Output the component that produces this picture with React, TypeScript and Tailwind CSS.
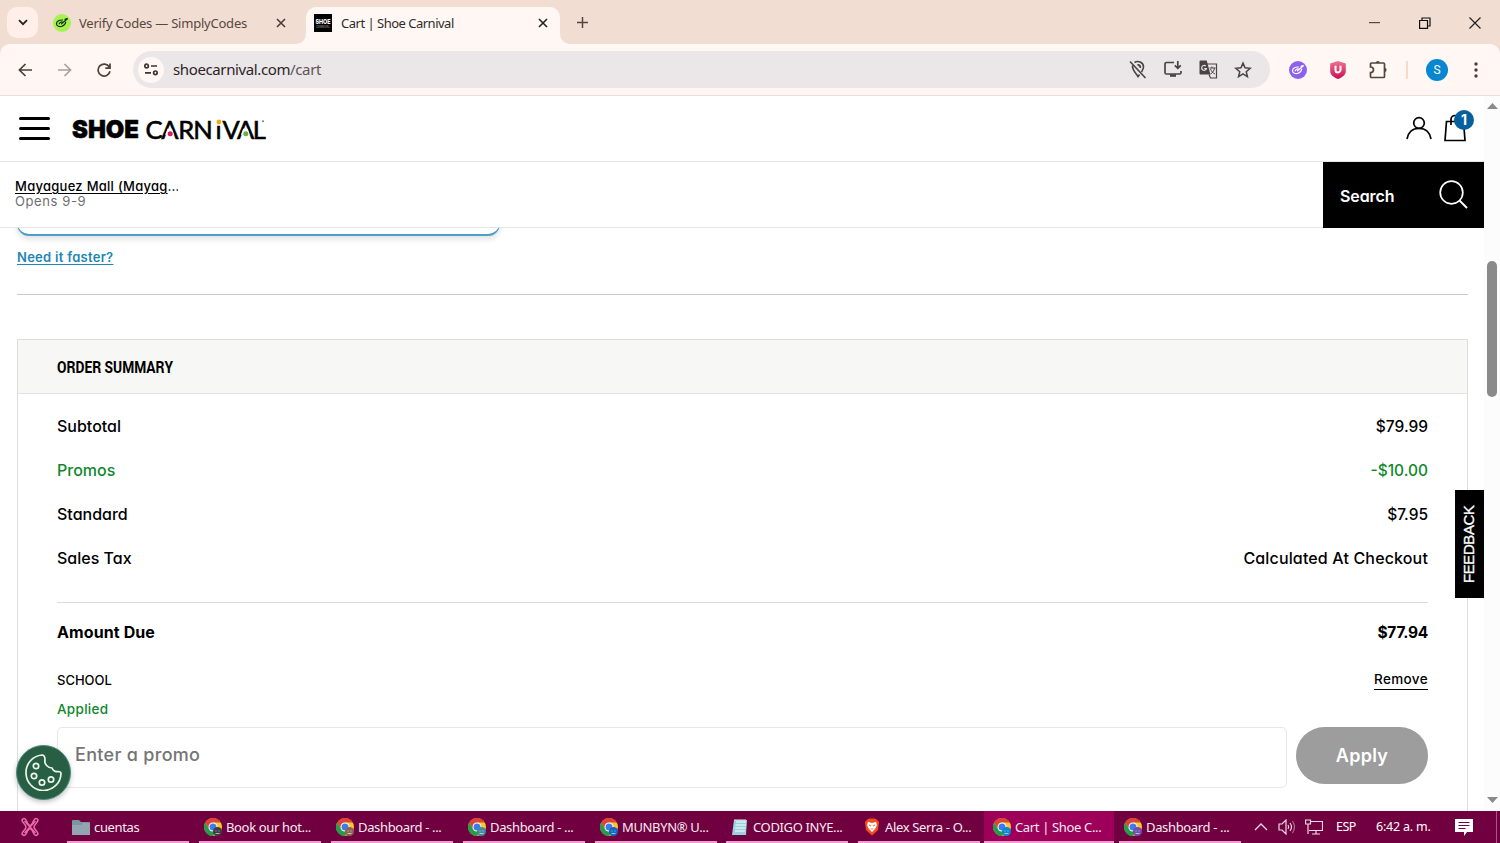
import React from "react";
import type { ReactNode } from "react";

const UI = "font-['Noto_Sans',sans-serif]";
const GEO = "font-['Inter',sans-serif] [font-feature-settings:'cv11','ss03']";

function SimplyIcon({ bg, fg }: { bg: string; fg: string }) {
  return (
    <svg width="18" height="18" viewBox="0 0 18 18" fill="none">
      <circle cx="9" cy="9" r="9" fill={bg} />
      <g stroke={fg} strokeWidth="1.2" strokeLinecap="round">
        <path d="M9.500 6C6 5.800 3.300 7.800 3.500 10c.3 2.400 3.200 3 5.500 2.200 2.200-.8 3.600-2.400 3.700-4.200" />
        <path d="M8.500 9.800 14.500 4.800M6.200 9.800c.6-1.500 2.300-2.200 3.600-1.600M12 5.300l1.800-.7" />
      </g>
    </svg>
  );
}

function Close({ color, size = 10 }: { color: string; size?: number }) {
  return (
    <svg width={size} height={size} viewBox="0 0 10 10" stroke={color} strokeWidth="1.600">
      <path d="M1 1l8 8M9 1L1 9" />
    </svg>
  );
}

function TabStrip() {
  return (
    <div className="flex h-[44px] shrink-0 bg-[#f2ddd2]">
      <div className="flex w-[53px] pl-[7px] pt-[7px]">
        <div className="flex h-[31px] w-[31px] items-center justify-center rounded-[10px] bg-[#ffefe8]">
          <svg width="10" height="7" viewBox="0 0 10 7" fill="none" stroke="#222" strokeWidth="1.800"><path d="M1 1.200l4 4 4-4" /></svg>
        </div>
      </div>
      <div className="flex h-[45px] w-[253px] items-center">
        <SimplyIcon bg="#a6f250" fg="#14300c" />
        <span className="ml-[8px] w-[197px] whitespace-nowrap pt-[2px] text-[13px] tracking-[-0.22px] text-[#56483f]">Verify Codes — SimplyCodes</span>
        <Close color="#4a3d36" />
      </div>
      <div className="relative mt-[7px] flex h-[37px] w-[254px] items-center rounded-t-[10px] bg-[#fef7f4] pb-[6px] pl-[8px]">
        <svg className="absolute -left-[10px] bottom-0" width="10" height="10"><path d="M10 0v10H0A10 10 0 0 0 10 0Z" fill="#fef7f4" /></svg>
        <svg className="absolute -right-[10px] bottom-0" width="10" height="10"><path d="M0 0v10h10A10 10 0 0 1 0 0Z" fill="#fef7f4" /></svg>
        <svg width="18" height="18" viewBox="0 0 18 18">
          <path d="M0 0h18v18H0z" />
          <text x="1.500" y="10" fontFamily="Inter" fontWeight="800" fontSize="6.500" fill="#fff" textLength="15" lengthAdjust="spacingAndGlyphs">SHOE</text>
          <text x="2" y="13.800" fontFamily="Inter" fontSize="3.400" fill="#aaa" textLength="14" lengthAdjust="spacingAndGlyphs">CARNIVAL</text>
        </svg>
        <span className="ml-[9px] w-[197px] whitespace-nowrap pt-[2px] text-[13px] tracking-[-0.5px] text-[#322c29]">Cart | Shoe Carnival</span>
        <Close color="#222" />
      </div>
      <div className="flex h-[45px] flex-1 items-center pl-[17px]">
        <svg width="11" height="11" viewBox="0 0 11 11" stroke="#54463e" strokeWidth="1.500"><path d="M5.500 0v11M0 5.500h11" /></svg>
        <div className="ml-auto flex items-center pr-[19px]">
          <svg className="mr-[39px]" width="11" height="11"><path d="M0 5h11v1.200H0z" fill="#554940" /></svg>
          <svg className="mr-[38px]" width="12" height="12" fill="none" stroke="#111" strokeWidth="1.200"><path d="M.6 3.500h7.900v7.900H.6zM3 3.500V1h8v8H8.500" /></svg>
          <svg width="12" height="12" stroke="#222" strokeWidth="1.200"><path d="M.5.5l11 11M11.500.5l-11 11" /></svg>
        </div>
      </div>
    </div>
  );
}

function Toolbar() {
  return (
    <div className="flex h-[52px] shrink-0 bg-[#f2ddd2]">
      <div className="flex flex-1 items-center rounded-t-[10px] border-b border-[#eaded9] bg-[#fef7f4] pl-[18px]">
        <svg width="14" height="14" viewBox="0 0 14 14" fill="none" stroke="#4b4039" strokeWidth="1.700"><path d="M14 7H1.500M7.500 1 1.400 7l6.100 6" /></svg>
        <svg className="ml-[26px]" width="14" height="14" viewBox="0 0 14 14" fill="none" stroke="#a8a09c" strokeWidth="1.700"><path d="M0 7h12.500M6.500 1l6.100 6-6.100 6" /></svg>
        <svg className="ml-[25px]" width="14" height="14" viewBox="0 0 14 14" fill="none" stroke="#4b4039" strokeWidth="1.700"><path d="M12.300 4A6 6 0 1 0 13 8.300M13 .5v4.700H8.300" /></svg>
        <div className="ml-[22px] flex h-[37px] w-[1137px] items-center rounded-full bg-[#ebe6e8] pl-[5px]">
          <div className="flex h-[26px] w-[26px] items-center justify-center rounded-full bg-[#fef7f4]">
            <svg width="14" height="13" viewBox="0 0 14 13" fill="none" stroke="#3d3531" strokeWidth="1.700"><circle cx="2.600" cy="3" r="1.800" /><path d="M7 3h6M1 9.800h6" /><circle cx="11.400" cy="9.800" r="1.800" /></svg>
          </div>
          <span className="ml-[9px] whitespace-nowrap text-[15px] tracking-[-0.38px] text-[#2b2526]">shoecarnival.com<span className="text-[#5d5557]">/cart</span></span>
          <div className="ml-auto flex items-center pr-[18px]">
            <svg className="mr-[17px]" width="18" height="19" viewBox="0 0 18 19" fill="none" stroke="#4b4346" strokeWidth="1.600"><path d="M1 1.500 16.500 18M5.500 2.500C9 .2 14.500 2.200 14.500 7c0 1.700-1 3.500-2 5M3.500 5.500C3 10 7 13.500 9 16.500l1.600-2.100" /><path d="M8.500 5.200a2 2 0 0 1 2.600 2.600" strokeWidth="2" /></svg>
            <svg className="mr-[17px]" width="18" height="17" viewBox="0 0 18 17" fill="none" stroke="#4b4346" strokeWidth="1.700"><path d="M10 1.500H2.500A1.500 1.500 0 0 0 1 3v8.500A1.500 1.500 0 0 0 2.500 13h13a1.500 1.500 0 0 0 1.500-1.500V10M13.800 0v7M10.800 4.300l3 3 3-3" /><path d="M6 13.300h6v2.500H6z" fill="#4b4346" stroke="none" /></svg>
            <svg className="mr-[16px]" width="19" height="19" viewBox="0 0 19 19"><path d="M1.500.5h6.200l3.800 14H1.500A1 1 0 0 1 .5 13.500v-12a1 1 0 0 1 1-1Z" fill="#4b4346" /><path d="M8 4h9.500v14h-6L10 14.500" fill="none" stroke="#4b4346" strokeWidth="1.200" /><path d="M10.500 8h6M13 6.500V8m2.500 0c-.5 3-2 5-4 6m0-5c1 2.500 2.500 4 4.500 5" fill="none" stroke="#4b4346" strokeWidth="1" /><path d="M6.800 6.200A2.400 2.400 0 1 0 7.400 8.500H5.200" fill="none" stroke="#ebe6e8" strokeWidth="1.200" /></svg>
            <svg width="18" height="18" viewBox="0 0 24 24" fill="none" stroke="#4b4346" strokeWidth="2"><path d="m12 2.800 2.700 6.300 6.800.6-5.200 4.500 1.600 6.700-5.900-3.600-5.900 3.600 1.600-6.700-5.200-4.500 6.800-.6z" /></svg>
          </div>
        </div>
        <div className="ml-[19px] flex items-center">
          <SimplyIcon bg="#8f60f0" fg="#fff" />
          <svg className="ml-[23px]" width="16" height="18" viewBox="0 0 16 18"><defs><linearGradient id="ub" x2="0" y2="1"><stop stopColor="#ee7291" /><stop offset="1" stopColor="#c90e53" /></linearGradient></defs><path d="M8 0 15.800 2.500v7.500c0 4-3.800 6.500-7.800 8C4 16.500.2 14 .2 10V2.500z" fill="url(#ub)" /><path d="M5.500 4.700v4.200a2.500 2.500 0 0 0 5 0V4.700" fill="none" stroke="#fff" strokeWidth="2" /></svg>
          <svg className="ml-[23px]" width="19" height="19" viewBox="0 0 19 19" fill="none" stroke="#54443b" strokeWidth="1.700"><path d="M2.500 3h12a1 1 0 0 1 1 1v12.500a1 1 0 0 1-1 1h-12a1 1 0 0 1-1-1v-3.800C5.500 12.700 5.500 7 1.500 7V4a1 1 0 0 1 1-1Z" /><path d="M6.800 3a2 2 0 0 1 4 0zM15.500 7.800a2.100 2.100 0 0 1 0 4.200z" fill="#54443b" stroke="none" /></svg>
          <div className="ml-[18px] h-[18px] w-[2px] bg-[#fbd9c9]" />
          <div className="ml-[18px] flex h-[22px] w-[22px] items-center justify-center rounded-full bg-[#0887d1] font-['Roboto',sans-serif] text-[12px] text-white">S</div>
          <svg className="ml-[26px]" width="4" height="16" fill="#4b4039"><circle cx="2" cy="2" r="1.700" /><circle cx="2" cy="8" r="1.700" /><circle cx="2" cy="14" r="1.700" /></svg>
        </div>
      </div>
    </div>
  );
}

function Logo() {
  return (
    <svg width="200" height="30" viewBox="0 -3 200 30">
      <text x="0" y="21.300" fontFamily="Inter" fontWeight="900" fontSize="25" stroke="#000" strokeWidth=".5" textLength="67" lengthAdjust="spacingAndGlyphs">SHOE</text>
      <text x="73.500 89.300 106.300 121.200 143.500 150.500 165 180.800" y="21.500" fontFamily="Lato" fontSize="25.500" stroke="#000" strokeWidth=".6">CARNiVAL</text>
      <path d="M95.500 11.800h4.400l2.400 5.900h-9.200zM171.200 11.800h4.400l2.400 5.900h-9.200z" fill="#fff" />
      <circle cx="98.200" cy="16.800" r="2.500" fill="#d1205a" />
      <path d="M143.500 .5h6v6.800h-6z" fill="#fff" />
      <circle cx="146.900" cy="5" r="2.400" fill="#f5a81c" />
      <circle cx="173.800" cy="16.800" r="2.500" fill="#64b445" />
      <circle cx="191" cy="4.300" r="1" fill="#777" />
    </svg>
  );
}

function SiteHeader() {
  return (
    <>
      <div className="flex h-[66px] shrink-0 items-center border-b border-[#e5e5e5] pl-[18px] pr-[17px]">
        <div className="flex w-[32px] flex-col gap-[7px] px-[0.5px]">
          <div className="h-[3px] rounded bg-black" /><div className="h-[3px] rounded bg-black" /><div className="h-[3px] rounded bg-black" />
        </div>
        <div className="ml-[22px]"><Logo /></div>
        <svg className="mb-[1px] ml-auto" width="26" height="24" viewBox="0 0 26 24" fill="none" stroke="#000" strokeWidth="1.700"><circle cx="13" cy="7" r="5.300" /><path d="M1 23c1-6.500 5.500-10.700 12-10.700S24 16.500 25 23" /></svg>
        <div className="relative mb-[2px] ml-[12px] mr-[1px] h-[28px] w-[22px]">
          <svg width="22" height="28" viewBox="0 0 22 28" fill="none" stroke="#000" strokeWidth="1.700"><path d="M2.500 7.500h17L21 26.500H1zM7 11V5.500a4 4 0 0 1 8 0v6" /></svg>
          <div className={`absolute left-[10px] top-[-4px] flex h-[20px] w-[20px] items-center justify-center rounded-full bg-[#07609d] text-[14px] font-bold text-white ${GEO}`}>1</div>
        </div>
      </div>
      <div className="flex h-[66px] shrink-0">
        <div className="flex-1 border-b border-[#e5e5e5] pl-[15px] pt-[16px]">
          <div className="h-[16px] w-fit overflow-hidden whitespace-nowrap text-[13px] font-medium leading-[17px] tracking-[0.27px]"><span className="underline underline-offset-2">Mayaguez Mall (Mayag</span><span className="tracking-[-1px]">…</span></div>
          <div className="text-[13px] leading-[15px] tracking-[0.6px] text-[#6e6e6e]">Opens 9-9</div>
        </div>
        <div className="flex w-[161px] items-center bg-black pl-[17px] pr-[16px] pt-[1px] text-white">
          <span className="text-[16px] font-semibold tracking-[-0.1px]">Search</span>
          <svg className="mb-[2px] ml-auto" width="29" height="29" viewBox="0 0 29 29" fill="none" stroke="#fff" strokeWidth="1.700"><circle cx="12.500" cy="12.500" r="11.300" /><path d="m20.500 20.500 7.500 7.500" strokeWidth="2" /></svg>
        </div>
      </div>
    </>
  );
}

function Row({ label, value, green = false, wide = false }: { label: string; value: ReactNode; green?: boolean; wide?: boolean }) {
  return (
    <div className={`flex h-[44px] items-center justify-between font-medium ${green ? "text-[#10872c]" : "text-black"}`}>
      <span className="pb-[2px] text-[16px]">{label}</span>
      <span className={wide ? "pb-[2px] text-[16px] tracking-[0.15px]" : "text-[15.500px]"}>{value}</span>
    </div>
  );
}

function Cart() {
  return (
    <div className="min-h-0 flex-1 overflow-hidden pl-[17px] pr-[16px]">
      <div className="-mt-[32px] h-[40px] w-[483px] rounded-[12px] border border-b-2 border-[#4a9fcb] bg-white shadow-[0_3px_6px_rgba(0,0,0,0.12)]" />
      <div className="mt-[11px] h-[20px] text-[13px] font-semibold leading-[20px] tracking-[0.28px] text-[#2186b4]"><span className="underline underline-offset-2">Need it faster?</span></div>
      <div className="mt-[27px] h-px bg-[#c9c9c9]" />
      <div className="mt-[44px] h-[600px] border border-[#dedede]">
        <div className="flex h-[54px] items-center border-b-[1.5px] border-[#e2e2e2] bg-[#f7f7f6] pl-[39px] pt-[2px]">
          <span className="origin-left scale-x-[0.81] whitespace-nowrap font-['Roboto',sans-serif] text-[17px] font-bold">ORDER SUMMARY</span>
        </div>
        <div className="px-[39px] pt-[11px]">
          <Row label="Subtotal" value="$79.99" />
          <Row label="Promos" value="-$10.00" green />
          <Row label="Standard" value="$7.95" />
          <Row label="Sales Tax" value="Calculated At Checkout" wide />
          <div className="mt-[21px] flex h-[60px] items-center justify-between border-t border-[#dcdcdc] text-[16px] font-bold"><span className="pb-[2px] tracking-[0.1px]">Amount Due</span><span className="text-[15.500px] tracking-[-0.25px]">$77.94</span></div>
          <div className="mt-[6px] flex h-[23px] items-start justify-between text-[13px] font-medium leading-[22px]"><span className="pt-[1px]">SCHOOL</span><span className="h-[22px] border-b border-black text-[13.500px] leading-[22px] tracking-[0.35px]">Remove</span></div>
          <div className="mt-[7px] h-[22px] text-[13.500px] font-medium leading-[22px] tracking-[0.3px] text-[#10872c]">Applied</div>
          <div className="mt-[7px] flex justify-between">
            <div className="flex h-[61px] w-[1230px] rounded-[5px] border border-[#e6e6ee] pl-[17px] pt-[13px] text-[18px] font-medium leading-[28px] tracking-[0.3px] text-[#757575]">Enter a promo</div>
            <div className="flex h-[57px] w-[132px] items-center justify-center rounded-full bg-[#9d9d9d] text-[18px] font-semibold tracking-[0.3px] text-white">Apply</div>
          </div>
        </div>
      </div>
    </div>
  );
}

function ScrollBar() {
  return (
    <div className="flex w-[16px] shrink-0 flex-col items-center bg-[#fcfcfc] pb-[8px] pt-[7px]">
      <svg width="11" height="6"><path d="M0 6 5.500 0 11 6z" fill="#8a8a8a" /></svg>
      <div className="mt-[152px] h-[136px] w-[10px] rounded-full bg-[#8a8a8a]" />
      <svg className="mt-auto" width="11" height="6"><path d="M0 0h11L5.500 6z" fill="#8a8a8a" /></svg>
    </div>
  );
}

function Chrome({ badge }: { badge: string }) {
  return (
    <svg width="18" height="18" viewBox="0 0 18 18">
      <circle cx="9" cy="9" r="9" fill="#f9c62b" />
      <path d="M1.200 4.500A9 9 0 0 1 16.800 4.500H9L5.100 11.250z" fill="#dc4437" />
      <path d="M1.200 4.500A9 9 0 0 0 9 18l3.900-6.750H5.100z" fill="#269b4c" />
      <circle cx="9" cy="9" r="4.500" fill="#fff" /><circle cx="9" cy="9" r="3.500" fill="#3b7ded" />
      <circle cx="13.500" cy="13.500" r="4.500" fill={badge} />
      <path d="M11.500 13h1m2 0h1m-4 2.500h4" stroke="#fff" strokeOpacity=".6" />
    </svg>
  );
}

function Task({ icon, label, active = false, gap = "mr-[10px]" }: { icon: ReactNode; label: string; active?: boolean; gap?: string }) {
  return (
    <div className={`flex shrink-0 items-center border-b-2 border-[#f09bd0] pt-[2px] ${active ? "w-[130px] bg-[#9c0059] pl-[9px]" : "w-[122px] pl-[5px]"} ${gap}`}>
      {icon}<span className="ml-[4px] whitespace-nowrap pt-[1px] text-[13px] tracking-[-0.35px] text-[#fbeaf3]">{label}</span>
    </div>
  );
}

function Taskbar() {
  return (
    <div className="flex h-[32px] shrink-0 bg-[#70003f]">
      <div className="flex w-[67px] items-center pl-[21px]">
        <svg width="18" height="20" viewBox="0 0 18 20" fill="none" stroke="#ee6cae" strokeWidth="1.500"><path d="M1 3c2-3 4-1 5.500 3C8 9 10 9 11.500 6 13 2 15 0 17 3c0 3-4 4-4 7s4 4 4 7c-2 3-4 1-5.500-3-1.500-3-3.500-3-5 0C5 18 3 20 1 17c0-3 4-4 4-7S1 6 1 3Z" /><path d="m3.500 4 11 12m0-12-11 12" /></svg>
      </div>
      <Task label="cuentas" icon={<svg width="18" height="17"><path d="M0 2q0-1 1-1h6l2 2h8q1 0 1 1v12H0z" fill="#8093a0" /><path d="M0 6h9l2-2h7v12H0z" fill="#92a6b2" /></svg>} />
      <Task label="Book our hot..." icon={<Chrome badge="#403b45" />} />
      <Task label="Dashboard - ..." icon={<Chrome badge="#8a6453" />} />
      <Task label="Dashboard - ..." icon={<Chrome badge="#408c9e" />} />
      <Task label="MUNBYN® U..." gap="mr-[9px]" icon={<Chrome badge="#1565c0" />} />
      <Task label="CODIGO INYE..." icon={<svg width="18" height="18" viewBox="0 0 18 18"><path d="M3 2h13l-1 15H1z" fill="#9bd0df" /><path d="M5 4h10M4.500 7H15M4 10h10.500M4 13h10" stroke="#d9f1f5" strokeWidth="1.500" /><path d="M4 1v2m2-2v2m2-2v2m2-2v2m2-2v2m2-2v2" stroke="#e8e8e8" /></svg>} />
      <Task label="Alex Serra - O..." gap="mr-[4px]" icon={<svg width="18" height="18" viewBox="0 0 18 18"><path d="m5 1 2-.5h4L13 1l3 3-1 8-6 5.500L3 12 2 4z" fill="#f25022" /><path d="m5 4 4 1 4-1 1 3-2 4-3 3-3-3-2-4z" fill="#fff" /><path d="m6 7 2 1m4-1-2 1m-2 2.500 1 1 1-1" stroke="#f25022" fill="none" /></svg>} />
      <Task label="Cart | Shoe C..." active gap="mr-[5px]" icon={<Chrome badge="#0887d1" />} />
      <Task label="Dashboard - ..." gap="mr-[13px]" icon={<Chrome badge="#704cae" />} />
      <div className="flex flex-1 items-center text-[12px] text-white">
        <svg width="14" height="8" fill="none" stroke="#f4d7e6" strokeWidth="1.300"><path d="m1 7 6-6 6 6" /></svg>
        <svg className="ml-[10px]" width="18" height="16" viewBox="0 0 18 16" fill="none" stroke="#f4d7e6" strokeWidth="1.200"><path d="M1 5h3l4-4v14l-4-4H1z" /><path d="M10 6q1.500 2 0 4M12 4q3 4 0 8" /><path d="M14.500 2q4 6 0 12" opacity=".5" /></svg>
        <svg className="ml-[9px]" width="18" height="16" viewBox="0 0 18 16" fill="none" stroke="#f4d7e6" strokeWidth="1.200"><path d="M6 2.500h11.500v9H4M.5 1h5v4h-5zM3 5v10M11 12v3M7 15h8" /></svg>
        <span className="ml-[13px] w-[40px] pt-[1px] text-[12.500px] tracking-[-0.5px]">ESP</span>
        <span className="w-[79px] whitespace-nowrap pt-[1px] text-[12.500px] tracking-[-0.2px]">6:42 a. m.</span>
        <svg width="18" height="18" viewBox="0 0 18 18"><path d="M0 1h18v13h-6l-3 4v-4H0z" fill="#fff" /><path d="M3.500 4.500h11M3.500 7.500h11M3.500 10.500h7" stroke="#70003f" /></svg>
      </div>
      <div className="mr-[3px] w-px bg-[#a95584]" />
    </div>
  );
}

export default function App() {
  return (
    <div className={`relative flex h-[843px] w-[1500px] flex-col overflow-hidden bg-white ${UI}`}>
      <TabStrip />
      <Toolbar />
      <div className="flex min-h-0 flex-1">
        <div className={`flex min-w-0 flex-1 flex-col text-black ${GEO}`}>
          <SiteHeader />
          <Cart />
        </div>
        <ScrollBar />
      </div>
      <Taskbar />
      <div className="absolute left-[1455px] top-[490px] flex h-[108px] w-[29px] items-center justify-center bg-black pr-[1px] text-white">
        <span className="-rotate-90 whitespace-nowrap font-['Liberation_Sans',sans-serif] text-[15px] tracking-[-0.4px] [-webkit-text-stroke:0.3px_white]">FEEDBACK</span>
      </div>
      <div className="absolute left-[16px] top-[745px] flex h-[55px] w-[55px] items-center justify-center rounded-full border border-[#4c8c80] bg-[#285e43] shadow-[0_2px_5px_rgba(0,0,0,0.25)]">
        <svg width="37" height="37" viewBox="0 0 37 37" fill="none" stroke="#eaf7ee" strokeWidth="1.700"><path d="M17 1C7 2 1 10 1 18.500a17.500 17.500 0 0 0 35 1c0-2-1-2-3-2-3 .5-5-1-6-3.500-4 0-8-4-7-8 0-3-1-5-3-5Z" /><circle cx="11" cy="12" r="2.700" /><circle cx="9" cy="22" r="2.700" /><circle cx="17" cy="28.500" r="2.700" /><circle cx="26" cy="25.500" r="2.700" /></svg>
      </div>
    </div>
  );
}
